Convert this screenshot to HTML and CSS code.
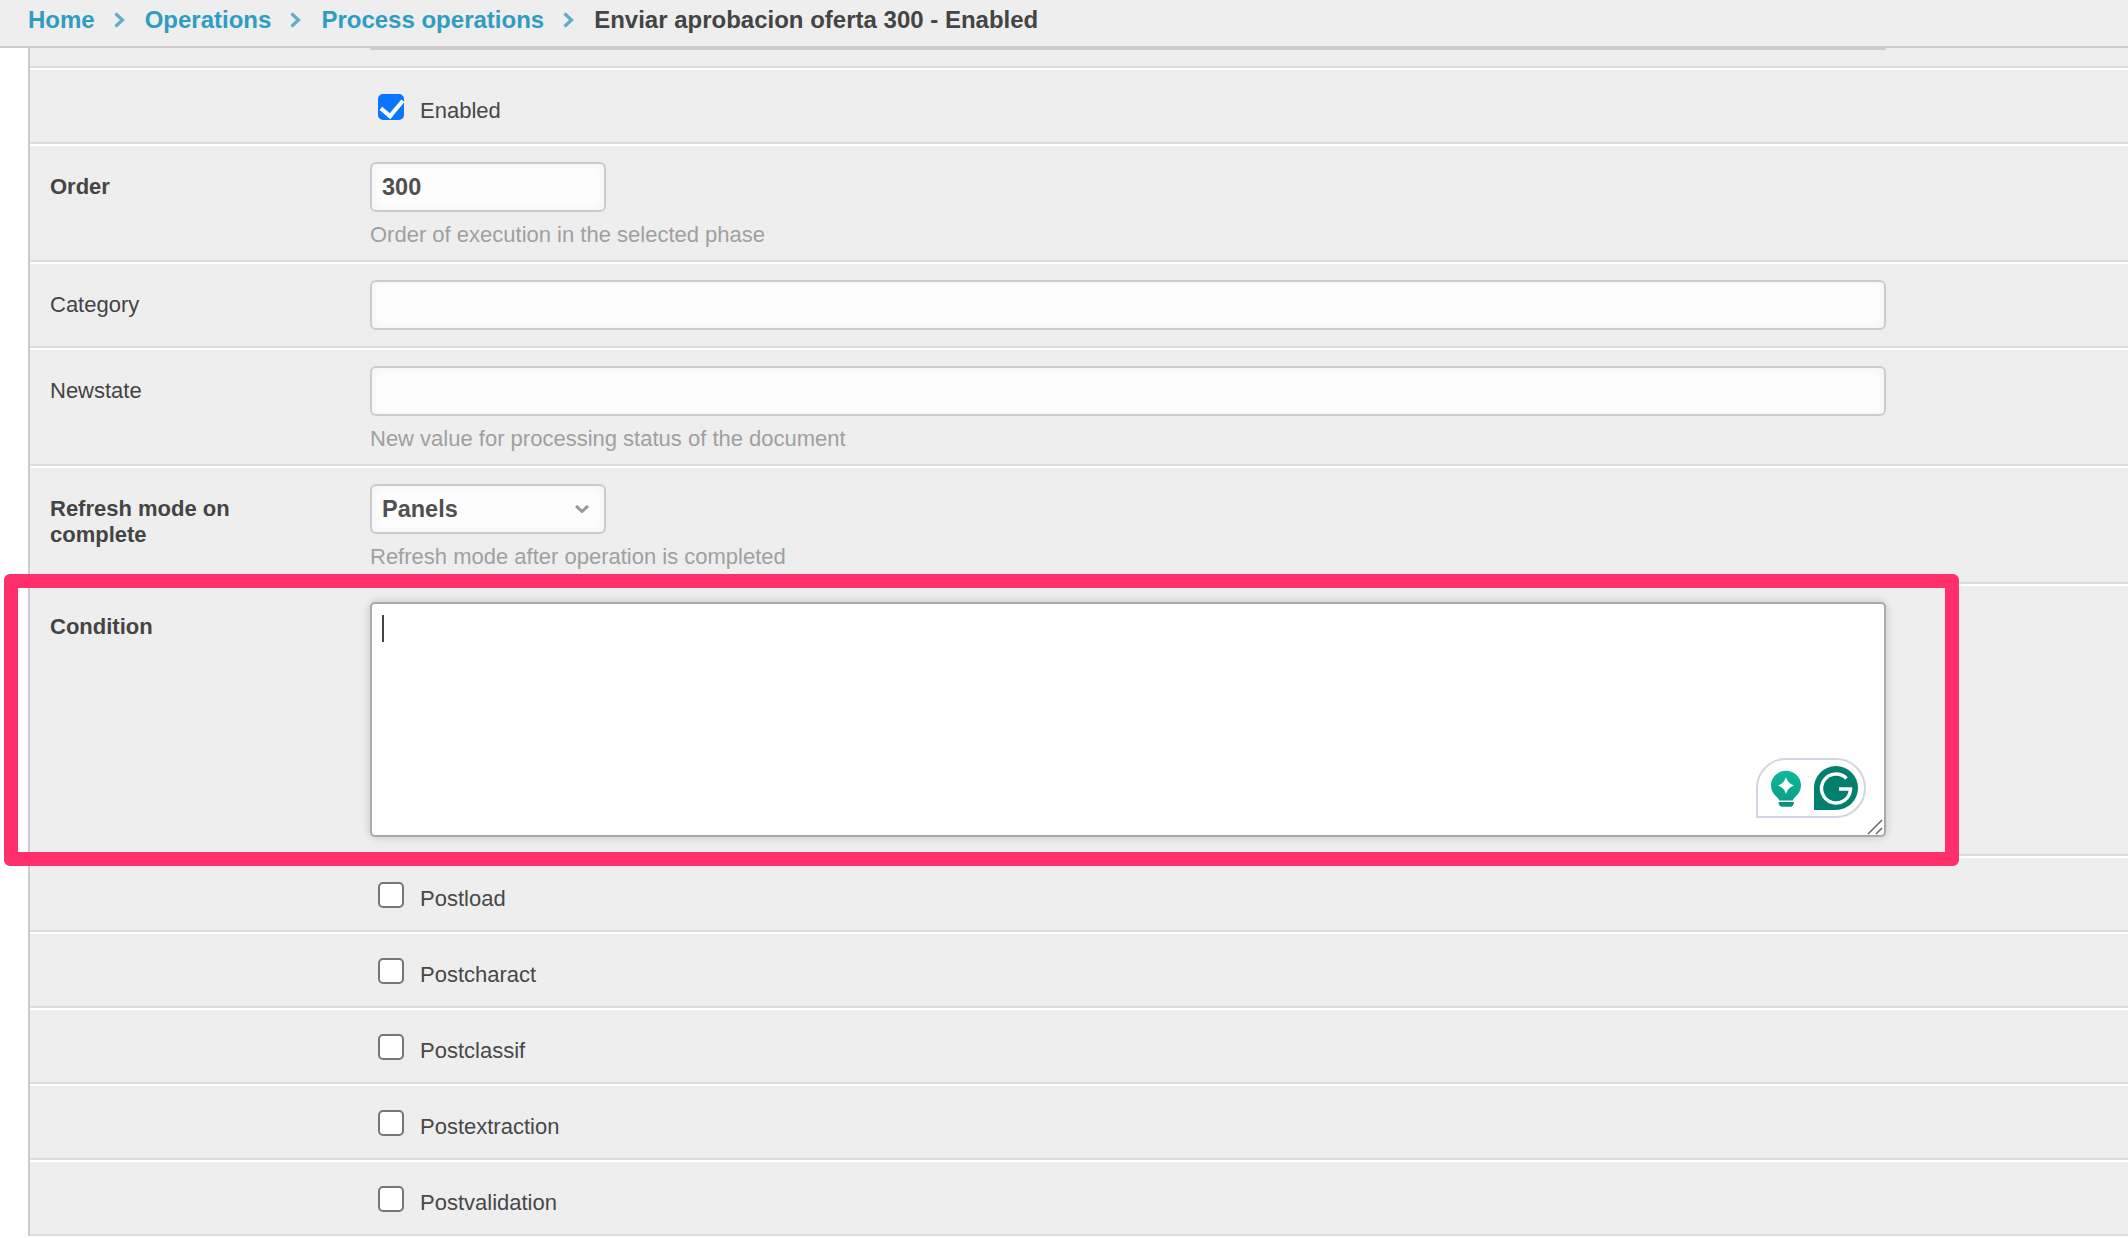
FILE: index.html
```html
<!DOCTYPE html>
<html lang="en">
<head>
<meta charset="utf-8">
<title>Enviar aprobacion oferta 300 - Enabled</title>
<link rel="stylesheet" href="styles.css">
</head>
<body>
<nav class="crumbs">
  <a class="crumb" href="#">Home</a>
  <svg class="sep-icon" viewBox="0 0 11 16"><path d="M1.500 1.500 8.500 8l-7 6.500"/></svg>
  <a class="crumb" href="#">Operations</a>
  <svg class="sep-icon" viewBox="0 0 11 16"><path d="M1.500 1.500 8.500 8l-7 6.500"/></svg>
  <a class="crumb" href="#">Process operations</a>
  <svg class="sep-icon" viewBox="0 0 11 16"><path d="M1.500 1.500 8.500 8l-7 6.500"/></svg>
  <span class="crumb-current">Enviar aprobacion oferta 300 - Enabled</span>
</nav>
<main class="form">
  <div class="row row-clipped"><div class="field"><div class="input-peek"></div></div></div>

  <div class="row row-check">
    <label class="check"><input type="checkbox" checked><span>Enabled</span></label>
  </div>

  <div class="row">
    <div class="label label-strong">Order</div>
    <div class="field">
      <input class="input input-short" type="text" value="300">
      <div class="help">Order of execution in the selected phase</div>
    </div>
  </div>

  <div class="row">
    <div class="label">Category</div>
    <div class="field"><input class="input" type="text"></div>
  </div>

  <div class="row">
    <div class="label">Newstate</div>
    <div class="field">
      <input class="input" type="text">
      <div class="help">New value for processing status of the document</div>
    </div>
  </div>

  <div class="row">
    <div class="label label-strong">Refresh mode on complete</div>
    <div class="field">
      <div class="select-wrap">
        <select class="input input-short select"><option>Panels</option></select>
        <svg class="select-arrow" viewBox="0 0 14 8"><path d="M1 1 7 6.500 13 1"/></svg>
      </div>
      <div class="help">Refresh mode after operation is completed</div>
    </div>
  </div>

  <div class="row">
    <div class="label label-strong">Condition</div>
    <div class="field area-wrap">
      <textarea class="area"></textarea>
      <span class="caret"></span>
      <div class="grammarly">
        <svg viewBox="0 0 110 60" width="110" height="60">
          <defs>
            <linearGradient id="bulbFill" x1="0" y1="0" x2="0" y2="1">
              <stop offset="0" stop-color="#0db99b"/>
              <stop offset="1" stop-color="#0a9f86"/>
            </linearGradient>
          </defs>
          <path fill="url(#bulbFill)" d="M30 12.700c8.200 0 15 6.400 15 14.500 0 5-2.600 9-6 12-1.500 1.300-2 2.400-2.200 3.300H23.200c-.2-.9-.7-2-2.200-3.300-3.400-3-6-7-6-12 0-8.100 6.800-14.500 15-14.500z"/>
          <path fill="#0a937c" d="M22.500 44h15.500c0 3-1.500 4.800-4 4.800h-7.500c-2.500 0-4-1.800-4-4.800z"/>
          <path fill="#fff" d="M30 19c1.500 4.500 3.500 6.800 8 8.500-4.500 1.700-6.500 4-8 8.500-1.500-4.500-3.500-6.800-8-8.500 4.500-1.700 6.500-4 8-8.500z"/>
          <path fill="#037f6e" d="M80 8a22 22 0 1 1 0 44H58V30A22 22 0 0 1 80 8z"/>
          <path fill="none" stroke="#fff" stroke-width="3.400" d="M90.500 20.500A14.500 14.500 0 1 0 94.500 31H83"/>
        </svg>
      </div>
      <svg class="grip" viewBox="0 0 16 16"><path d="M1 15 15 1M9 15l6-6"/></svg>
    </div>
  </div>

  <div class="row row-check"><label class="check"><input type="checkbox"><span>Postload</span></label></div>
  <div class="row row-check"><label class="check"><input type="checkbox"><span>Postcharact</span></label></div>
  <div class="row row-check"><label class="check"><input type="checkbox"><span>Postclassif</span></label></div>
  <div class="row row-check"><label class="check"><input type="checkbox"><span>Postextraction</span></label></div>
  <div class="row row-check"><label class="check"><input type="checkbox"><span>Postvalidation</span></label></div>
</main>
<div class="highlight"></div>
</body>
</html>
```
FILE: styles.css
```css
* { box-sizing: border-box; }

html, body {
  margin: 0;
  height: 1238px;
  overflow: hidden;
  background: #fff;
}

body {
  position: relative;
  font-family: "Liberation Sans", Arial, sans-serif;
  font-size: 22px;
  line-height: 26px;
  color: #484848;
}

.crumbs {
  display: flex;
  align-items: center;
  gap: 20px;
  height: 48px;
  padding: 0 0 6px 28px;
  background: #eee;
  border-bottom: 2px solid #ccc;
  font-size: 24px;
  font-weight: 700;
}

.crumb { color: #2f9cc1; text-decoration: none; }
.crumb-current { color: #444; }

.sep-icon { width: 11px; height: 16px; flex: none; margin-left: -1px; }
.sep-icon path { fill: none; stroke: #62abc9; stroke-width: 3.200; }

.form {
  margin-left: 28px;
  border-left: 2px solid #ccc;
}

.row {
  display: grid;
  grid-template-columns: 240px 1516px;
  column-gap: 80px;
  padding: 16px 0 16px 20px;
  background: #eee;
  border-bottom: 2px solid #ddd;
  box-shadow: 0 2px 0 #fff;
  margin-bottom: 2px;
}

.row-clipped { height: 20px; padding-top: 0; padding-bottom: 0; }
.row-clipped .field { grid-column: 2; }

.input-peek {
  height: 2px;
  background: #ccc;
  border-radius: 0 0 4px 4px;
}

.row-check {
  display: block;
  height: 74px;
  padding: 24px 0 0 348px;
}

.check { display: flex; align-items: flex-start; }

.check input {
  appearance: none;
  -webkit-appearance: none;
  position: relative;
  width: 26px;
  height: 26px;
  margin: 0 16px 0 0;
  flex: none;
  background: #fff;
  border: 2px solid #767676;
  border-radius: 5px;
}

.check input:checked {
  background: #0a75ff;
  border-color: #0a75ff;
}

.check input:checked::after {
  content: "";
  position: absolute;
  left: 5px;
  top: -1px;
  width: 10px;
  height: 18px;
  border: solid #fff;
  border-width: 0 4px 4px 0;
  transform: rotate(40deg);
}

.check span { margin-top: 4px; }

.label { padding-top: 12px; color: #444; }
.label-strong { font-weight: 700; }

.input {
  display: block;
  width: 100%;
  height: 50px;
  padding: 0 10px;
  background: #fdfdfd;
  border: 2px solid #ccc;
  border-radius: 6px;
  box-shadow: inset 0 0 8px rgba(0, 0, 0, .05);
  font: 700 23.500px "Liberation Sans", Arial, sans-serif;
  color: #505050;
  outline: none;
}

.input-short { width: 236px; }

.select { appearance: none; -webkit-appearance: none; }

.select-wrap { position: relative; width: 236px; }

.select-arrow {
  position: absolute;
  top: 21px;
  right: 17px;
  width: 14px;
  height: 8px;
}
.select-arrow path { fill: none; stroke: #999; stroke-width: 3; }

.help {
  margin: 10px 0 -4px;
  color: #a0a0a0;
}

.area-wrap { position: relative; height: 235px; margin-bottom: 1px; }

.area {
  display: block;
  width: 100%;
  height: 235px;
  background: #fff;
  border: 2px solid #a9a9a9;
  border-radius: 5px;
  box-shadow: 0 0 8px rgba(0, 0, 0, .18);
  outline: none;
  resize: none;
}

.caret {
  position: absolute;
  left: 12px;
  top: 13px;
  width: 2px;
  height: 27px;
  background: #444;
}

.grammarly {
  position: absolute;
  left: 1386px;
  top: 156px;
  width: 110px;
  height: 60px;
  background: #fff;
  border: 2px solid #d3d6e2;
  border-radius: 30px 30px 30px 0;
}

.grammarly svg { display: block; margin: -2px; }

.grip {
  position: absolute;
  right: 3px;
  bottom: 2px;
  width: 16px;
  height: 16px;
}
.grip path { fill: none; stroke: #666; stroke-width: 1.500; }

.highlight {
  position: absolute;
  left: 4px;
  top: 574px;
  width: 1955px;
  height: 292px;
  border: 14px solid #ff2f6b;
  border-radius: 6px;
  pointer-events: none;
}
```
